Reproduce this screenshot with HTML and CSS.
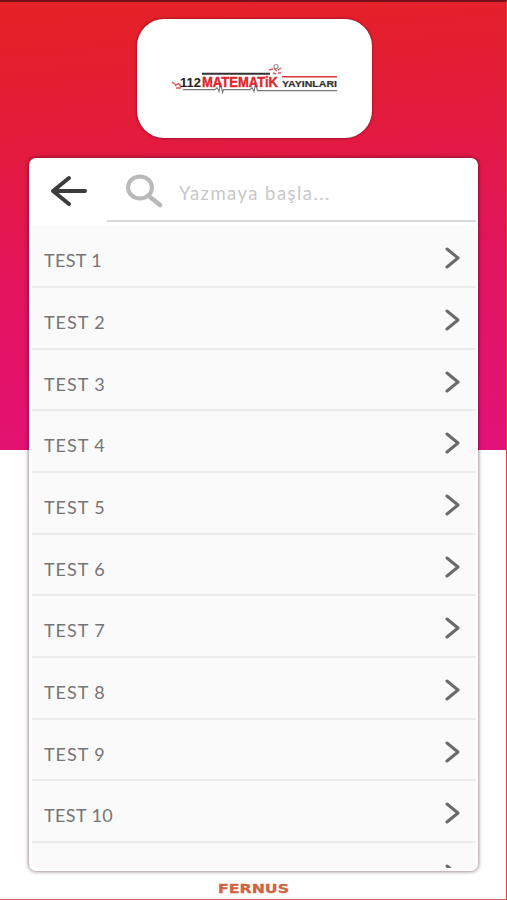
FILE: index.html
```html
<!DOCTYPE html>
<html lang="tr">
<head>
<meta charset="utf-8">
<title>112 Matematik Yayınları</title>
<link rel="stylesheet" href="styles.css">
</head>
<body>
<div class="app">
  <header class="brand">
    <svg class="brand-logo" width="190" height="45" viewBox="0 0 190 45" role="img" aria-label="112 Matematik Yayınları">
      <path class="dark-bar" d="M42 18.8H110"/>
      <path class="red-bar" d="M122 21.8H177"/>
      <path class="pulse" d="M23 34.6H55l2-2 2 4 1.500-9 2 10 1-3H90l2-2 2 4 1.500-8 2 7H177"/>
      <g class="sparks">
        <path d="M12 27l4 3M15 31l4-3M16 33h5M19 29l2 3"/>
        <path d="M109 15l4-1M114 13l3 3M118 15l3-2M113 18l3 1M118 18h3"/>
      </g>
      <circle class="bulb" cx="116" cy="11.500" r="2"/>
      <text class="num" x="20" y="31.500" textLength="21" lengthAdjust="spacingAndGlyphs">112</text>
      <text class="name" x="42" y="31.500" textLength="76" lengthAdjust="spacingAndGlyphs">MATEMATiK</text>
      <text class="pub" x="122" y="31.500" textLength="55" lengthAdjust="spacingAndGlyphs">YAYINLARI</text>
    </svg>
  </header>
  <main class="panel">
    <div class="toolbar">
      <svg class="back" width="38" height="34" viewBox="0 0 38 34"><path d="M35 17H3M19 4L3 17L19 30"/></svg>
      <div class="search">
        <svg class="lens" width="38" height="34" viewBox="0 0 38 34"><ellipse cx="15" cy="13.500" rx="12" ry="11"/><path d="M25 23L35 31"/></svg>
        <span class="hint">Yazmaya başla...</span>
      </div>
    </div>
    <div class="list">
      <div class="row"><span>TEST 1</span><svg class="chevron" viewBox="0 0 16 22"><path d="M2 2L13 11L2 20"/></svg></div>
      <div class="row"><span>TEST 2</span><svg class="chevron" viewBox="0 0 16 22"><path d="M2 2L13 11L2 20"/></svg></div>
      <div class="row"><span>TEST 3</span><svg class="chevron" viewBox="0 0 16 22"><path d="M2 2L13 11L2 20"/></svg></div>
      <div class="row"><span>TEST 4</span><svg class="chevron" viewBox="0 0 16 22"><path d="M2 2L13 11L2 20"/></svg></div>
      <div class="row"><span>TEST 5</span><svg class="chevron" viewBox="0 0 16 22"><path d="M2 2L13 11L2 20"/></svg></div>
      <div class="row"><span>TEST 6</span><svg class="chevron" viewBox="0 0 16 22"><path d="M2 2L13 11L2 20"/></svg></div>
      <div class="row"><span>TEST 7</span><svg class="chevron" viewBox="0 0 16 22"><path d="M2 2L13 11L2 20"/></svg></div>
      <div class="row"><span>TEST 8</span><svg class="chevron" viewBox="0 0 16 22"><path d="M2 2L13 11L2 20"/></svg></div>
      <div class="row"><span>TEST 9</span><svg class="chevron" viewBox="0 0 16 22"><path d="M2 2L13 11L2 20"/></svg></div>
      <div class="row"><span class="two-digit">TEST 10</span><svg class="chevron" viewBox="0 0 16 22"><path d="M2 2L13 11L2 20"/></svg></div>
      <div class="row"><span></span><svg class="chevron" viewBox="0 0 16 22"><path d="M2 2L13 11L2 20"/></svg></div>
    </div>
  </main>
  <footer class="maker">
    <svg width="74" height="12" viewBox="0 0 74 12"><text x="1" y="10" textLength="71" lengthAdjust="spacingAndGlyphs">FERNUS</text></svg>
  </footer>
</div>
</body>
</html>
```

FILE: styles.css
```css
* { box-sizing: border-box; }
body { margin: 0; font-family: Lato, "Liberation Sans", sans-serif; }
.app {
  height: 900px;
  overflow: hidden;
  display: flex;
  flex-direction: column;
  align-items: center;
  border-top: 2px solid #76101a;
  border-right: 1px solid #f0383f;
  border-bottom: 1px solid #df5a5a;
  background: linear-gradient(175deg, #e52224 0%, #e31c38 25%, #e2145c 58%, #e21279 100%) 0 0 / 100% 448px no-repeat #fff;
}
.brand {
  flex: none;
  width: 235px;
  height: 119px;
  margin: 17px 0 0 2px;
  border-radius: 27px;
  background: #fff;
  box-shadow: 0 0 3px rgba(70, 0, 20, .7);
  display: flex;
  justify-content: center;
  padding-top: 36px;
}
.brand-logo { flex: none; margin-left: 2px; }
.brand-logo path, .bulb { fill: none; }
.dark-bar { stroke: #333; stroke-width: 2; }
.red-bar { stroke: #d9363c; stroke-width: 1.400; }
.pulse { stroke: #777; stroke-width: 1.100; }
.sparks { stroke: #de5560; stroke-width: 1.500; }
.bulb { stroke: #999; stroke-width: 1.200; }
.num, .name, .pub { font-family: "Liberation Sans", sans-serif; font-weight: bold; }
.num { font-size: 13.500px; fill: #222; }
.name { font-size: 14.500px; fill: #df252c; stroke: #df252c; stroke-width: .4; }
.pub { font-size: 8.500px; fill: #333; stroke: #333; stroke-width: .2; }
.panel {
  flex: none;
  width: 449px;
  height: 713px;
  margin: 20px 0 0 1px;
  padding: 0 2px 3px 3px;
  border-radius: 7px;
  background: #fff;
  box-shadow: 0 0 4px rgba(40, 0, 15, .65);
  display: flex;
  flex-direction: column;
}
.toolbar { flex: none; height: 68.400px; display: flex; align-items: flex-start; }
.back { margin: 16px 0 0 18px; fill: none; stroke: #3c3c3c; stroke-width: 4; stroke-linecap: round; stroke-linejoin: round; }
.search {
  flex: 1;
  height: 64px;
  margin-left: 19px;
  border-bottom: 2px solid #d9d9d9;
  display: flex;
  align-items: flex-start;
}
.lens { margin: 16px 0 0 18px; fill: none; stroke: #b9b9b9; stroke-width: 4; stroke-linecap: round; }
.lens path { stroke-width: 4.500; }
.hint { margin: 23px 0 0 16px; font-size: 18.500px; line-height: 24px; letter-spacing: 1.450px; color: #c8c8c8; white-space: nowrap; }
.list { flex: 1; min-height: 0; overflow: hidden; background: #fafafa; border-radius: 0 0 5px 5px; }
.row {
  height: 61.680px;
  padding: 4px 15px 0 12px;
  border-bottom: 2px solid #ebebeb;
  display: flex;
  align-items: center;
  justify-content: space-between;
  color: #757575;
  font-size: 18px;
  letter-spacing: .95px;
}
.row span { padding-top: 4px; }
.row:first-child span { letter-spacing: .35px; }
.row .two-digit { letter-spacing: .4px; }
.chevron { width: 16px; height: 22px; fill: none; stroke: #6a6a6a; stroke-width: 3; stroke-linecap: round; stroke-linejoin: round; }
.maker { display: flex; padding: 12px 0 0 2px; }
.maker text { font-family: "DejaVu Sans", sans-serif; font-weight: bold; font-size: 11.500px; fill: #d06340; stroke: #d06340; stroke-width: .3; }
```
